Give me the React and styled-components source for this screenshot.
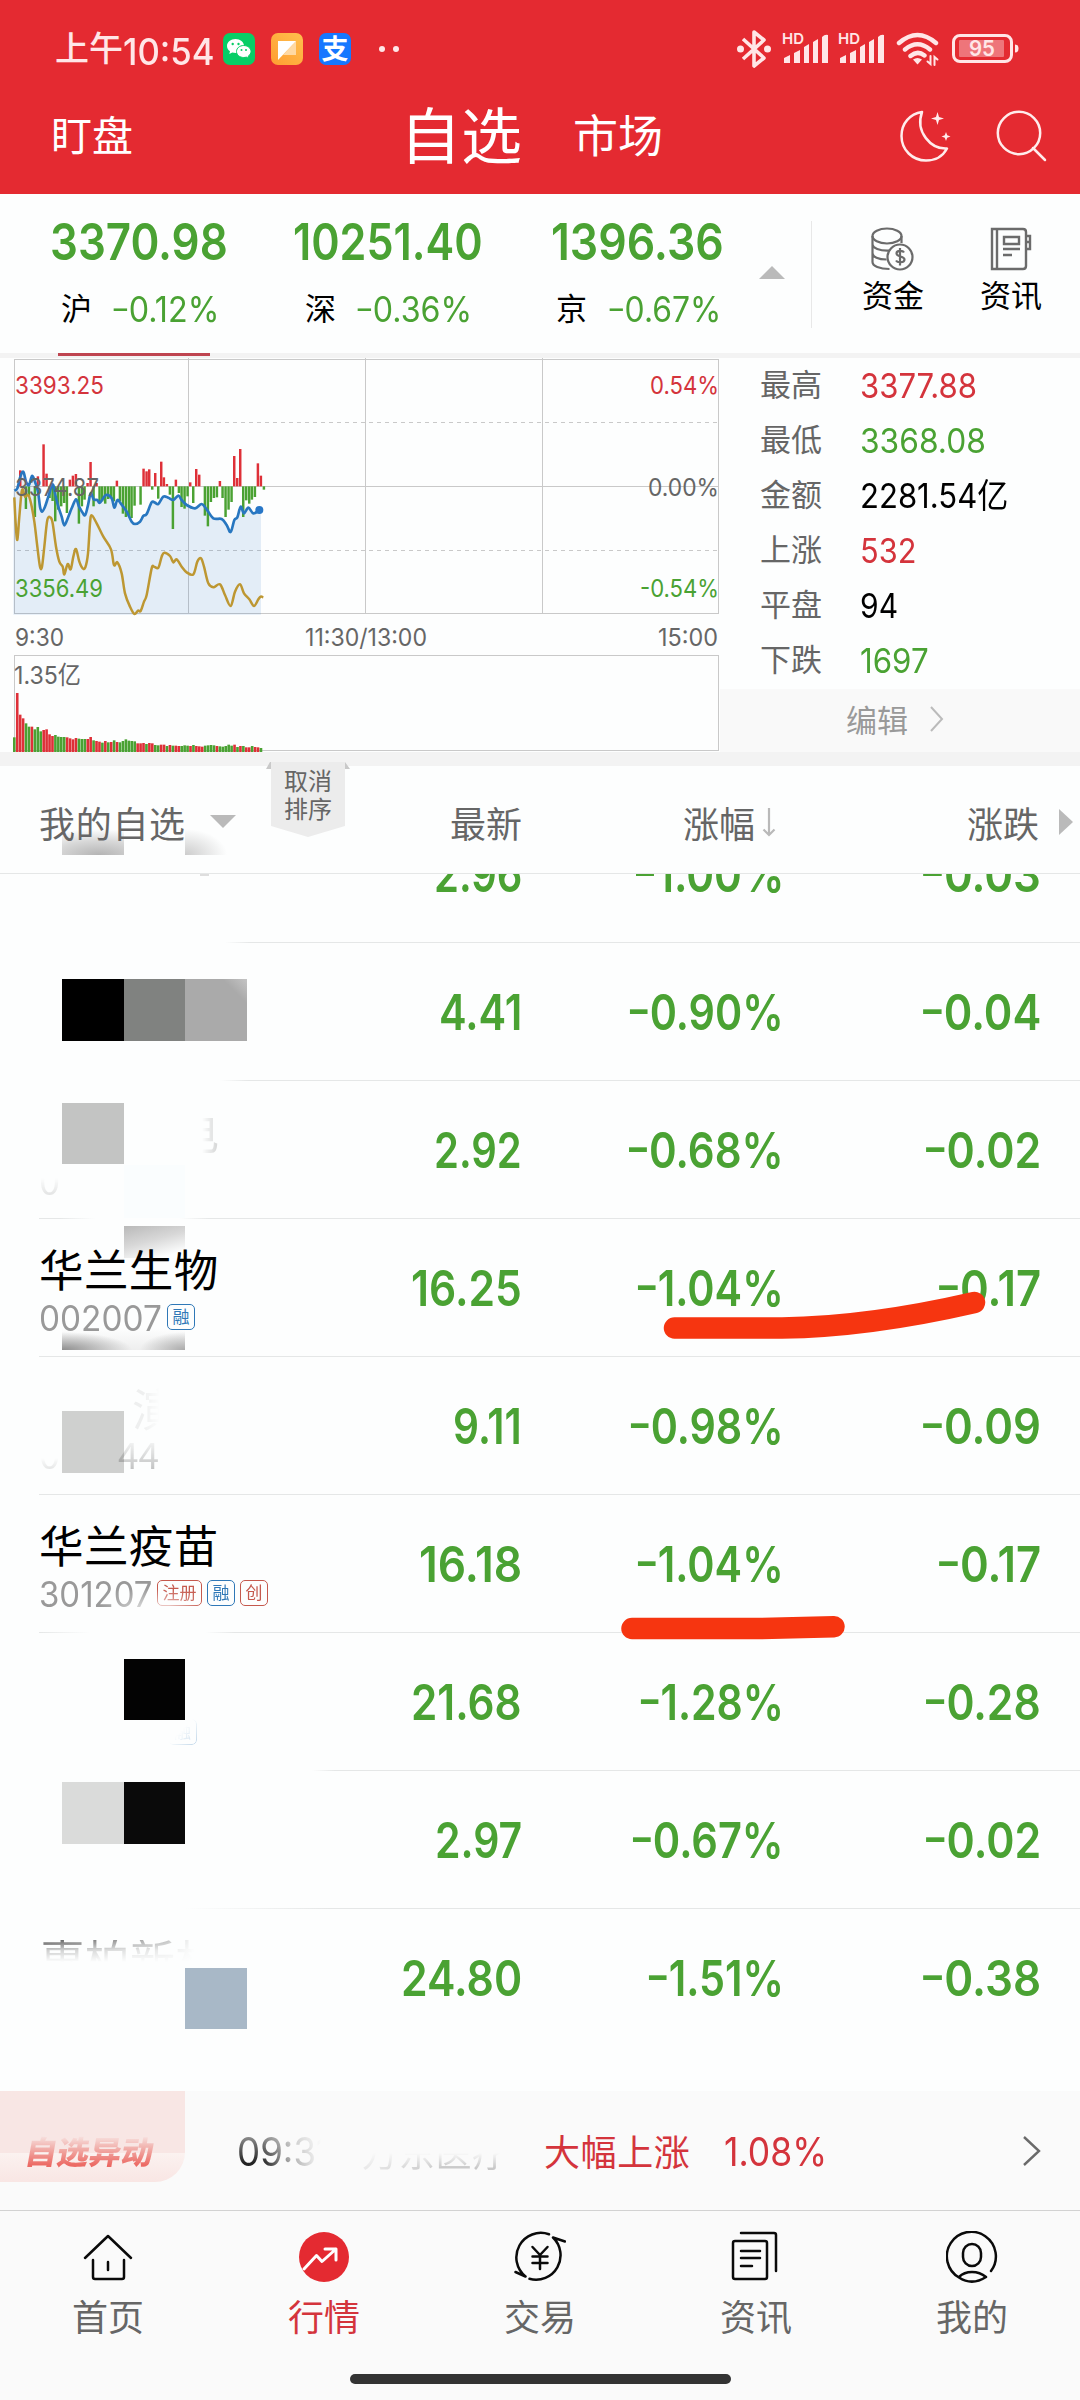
import React, { useLayoutEffect, useRef, useState } from "react";
import styled, { createGlobalStyle } from "styled-components";

const GREEN = "#4aa233";
const RED = "#d4343c";
const LINE = "#e5e7e7";

const indexes = [
  { value: "3370.98", vw: 178, name: "沪", pct: "-0.12%", pw: 107, width: 243, nameLeft: 11, gap: 20, active: true },
  { value: "10251.40", vw: 190, name: "深", pct: "-0.36%", pw: 116, width: 258, nameLeft: 12, gap: 20 },
  { value: "1396.36", vw: 173, name: "京", pct: "-0.67%", pw: 113, width: 208, nameLeft: 5, gap: 21 },
];

const stats = [
  { label: "最高", value: "3377.88", width: 117, color: RED },
  { label: "最低", value: "3368.08", width: 126, color: GREEN },
  { label: "金额", value: "2281.54亿", width: 148, color: "#000" },
  { label: "上涨", value: "532", width: 56, color: RED },
  { label: "平盘", value: "94", width: 38, color: "#000" },
  { label: "下跌", value: "1697", width: 69, color: GREEN },
];

const rows = [
  {
    price: ["2.96", 88],
    pct: ["-1.00%", 150],
    diff: ["-0.03", 120],
    line: "transparent 225px, #e5e7e7 250px",
    blocks: [{ x: 200, y: 69, w: 9, h: 2, bg: "#dedede" }],
  },
  {
    price: ["4.41", 83],
    pct: ["-0.90%", 156],
    diff: ["-0.04", 120],
    line: "transparent 220px, #e5e7e7 248px",
    blocks: [
      { x: 62, y: 36, w: 62, h: 62, bg: "#000" },
      { x: 124, y: 36, w: 61, h: 62, bg: "#808280" },
      { x: 185, y: 36, w: 62, h: 62, bg: "linear-gradient(225deg, #c4c4c4, #aaa 20%)" },
    ],
  },
  {
    price: ["2.92", 88],
    pct: ["-0.68%", 157],
    diff: ["-0.02", 117],
    line: "transparent 39px, #e5e7e7 39px, #e5e7e7 60px, transparent 95px, transparent 180px, #e5e7e7 210px",
    ghosts: [
      { text: "电", x: 174, y: 25, size: 45, mask: "linear-gradient(90deg, transparent 28px, rgba(0,0,0,.14) 42px)" },
      { text: "0", x: 39, y: 73, size: 38, mask: "linear-gradient(transparent 24px, rgba(0,0,0,.11) 42px)" },
    ],
    blocks: [
      { x: 62, y: 22, w: 62, h: 61, bg: "#c3c4c3" },
      { x: 124, y: 84, w: 61, h: 53, bg: "#fafdfe" },
    ],
  },
  {
    name: "华兰生物",
    code: ["002007", 123],
    tags: [["融", "#2f78b7"]],
    price: ["16.25", 111],
    pct: ["-1.04%", 148],
    diff: ["-0.17", 104],
    line: "transparent 39px, #e5e7e7 39px",
    blocks: [
      { x: 124, y: 7, w: 61, h: 32, bg: "linear-gradient(165deg, #b9b9b9, #d8d8d8 45%, #fdfefe 85%)" },
      {
        x: 62,
        y: 109,
        w: 123,
        h: 22,
        bg: "radial-gradient(70px 18px at 0 100%, #8e8e8e, transparent), radial-gradient(45px 18px at 100% 100%, #aaa, transparent), linear-gradient(#fdfefe, #eee)",
      },
    ],
  },
  {
    price: ["9.11", 69],
    pct: ["-0.98%", 155],
    diff: ["-0.09", 120],
    line: "transparent 39px, #e5e7e7 39px",
    ghosts: [
      { text: "演", x: 132, y: 26, size: 45, mask: "linear-gradient(90deg, rgba(0,0,0,.06) 10px, transparent 28px)" },
      { text: "44", x: 118, y: 71, size: 37, over: true, mask: "linear-gradient(transparent 8px, rgba(0,0,0,.25) 44px)" },
      { text: "0", x: 39, y: 71, size: 38, mask: "linear-gradient(transparent 30px, rgba(0,0,0,.1) 42px)" },
    ],
    blocks: [{ x: 62, y: 54, w: 62, h: 62, bg: "#cfd0cf" }],
  },
  {
    name: "华兰疫苗",
    code: ["301207", 113],
    fade: true,
    tags: [
      ["注册", "#c5594d"],
      ["融", "#2f78b7"],
      ["创", "#c5594d"],
    ],
    price: ["16.18", 103],
    pct: ["-1.04%", 148],
    diff: ["-0.17", 104],
    line: "transparent 39px, #e5e7e7 39px, transparent 90px, transparent 205px, #e5e7e7 235px",
    blocks: [],
  },
  {
    price: ["21.68", 111],
    pct: ["-1.28%", 145],
    diff: ["-0.28", 117],
    line: "transparent 312px, #e5e7e7 335px",
    ghostTag: true,
    blocks: [{ x: 124, y: 26, w: 61, h: 61, bg: "#030303" }],
  },
  {
    price: ["2.97", 87],
    pct: ["-0.67%", 153],
    diff: ["-0.02", 117],
    line: "transparent 185px, #e5e7e7 330px",
    blocks: [
      { x: 62, y: 11, w: 62, h: 62, bg: "#dadbda" },
      { x: 124, y: 11, w: 61, h: 62, bg: "#0a0a0a" },
    ],
  },
  {
    price: ["24.80", 121],
    pct: ["-1.51%", 137],
    diff: ["-0.38", 120],
    line: "transparent, transparent",
    ghosts: [
      {
        text: "惠柏新材",
        x: 40,
        y: 25,
        size: 45,
        mask: "linear-gradient(transparent 6px, #000 6px, rgba(0,0,0,.3) 16px, transparent 28px), linear-gradient(90deg, rgba(0,0,0,.65), rgba(0,0,0,.25) 125px, transparent 155px)",
      },
    ],
    blocks: [{ x: 185, y: 59, w: 62, h: 61, bg: "#a8b8c7" }],
  },
];

// Stretches a run of digits to a fixed column width
function Fit({ w, children }) {
  const ref = useRef(null);
  const [scale, setScale] = useState(1);
  const negative = children[0] === "-";

  useLayoutEffect(() => {
    setScale(w / ref.current.offsetWidth);
  }, [w, children]);

  return (
    <FitBox style={{ width: w }}>
      <FitText ref={ref} style={{ transform: `scaleX(${scale})` }}>
        {negative && <Minus>-</Minus>}
        {negative ? children.slice(1) : children}
      </FitText>
    </FitBox>
  );
}

/* ---------- chart data, in thirds of a pixel ---------- */

const bars = [
  [61, 48], [78, -68], [87, -30], [105, -92], [114, 30], [131, 126], [140, 38], [149, -35], [158, -44], [166, -105],
  [175, -70], [184, -60], [193, -50], [201, -80], [210, 20], [219, 32], [228, 37], [237, -112], [246, -60],
  [254, -40], [263, 10], [272, 73], [281, -60], [290, 10], [299, -48], [307, -45], [316, -52], [325, -38],
  [334, -35], [342, -45], [351, 17], [360, -45], [369, -82], [378, -92], [387, -88], [395, -95], [404, -58],
  [422, -55], [431, 53], [440, 45], [448, 51], [457, -10], [466, 40], [475, -37], [484, 74], [492, 27], [501, 7],
  [510, -25], [519, -128], [528, 20], [537, -20], [545, -62], [554, -67], [563, -30], [571, 12], [580, -50],
  [589, 52], [598, 35], [615, -88], [624, -120], [633, -47], [642, -35], [651, -33], [660, 16], [668, -35],
  [677, -92], [686, -70], [695, -47], [703, 91], [712, 25], [721, 112], [730, -92], [739, -42], [748, -52],
  [756, -40], [765, -32], [774, 69], [783, 32], [792, -10],
];

const priceLine =
  "43,452 52,445 61,410 70,395 78,425 87,435 96,408 105,425 114,455 120,500 126,515 135,500 145,470 158,433 166,465 175,500 185,530 193,556 205,530 215,505 228,478 237,500 246,515 255,526 263,500 272,460 281,478 292,480 300,488 318,465 335,475 343,503 352,480 362,490 380,515 395,545 405,552 420,545 430,528 440,522 455,487 465,488 475,492 490,470 505,473 520,480 535,467 545,480 560,495 585,505 605,492 620,508 640,535 665,537 680,555 692,576 703,540 712,532 722,500 732,520 745,503 760,520 778,510";

const averageLine =
  "43,472 47,550 52,600 58,530 66,450 75,470 85,465 93,490 103,545 112,620 120,680 126,680 133,620 142,540 152,533 158,550 168,620 178,665 188,680 193,703 203,672 212,688 220,650 228,627 238,665 248,685 256,682 264,640 270,550 275,526 290,550 310,590 333,628 342,675 352,667 365,700 375,760 390,800 403,822 414,812 422,813 432,785 440,765 455,685 462,680 475,683 485,650 493,638 510,648 520,667 530,658 545,680 560,697 580,703 592,665 603,655 612,680 625,730 640,742 660,733 675,765 692,798 705,755 720,733 732,760 748,778 762,798 775,778 782,770 790,772";

const volumes = [
  44, 177, 112, 101, 86, 76, 76, 68, 75, 62, 66, 68, 53, 48, 51, 46, 45, 45, 44, 41, 38, 42, 40, 39, 39, 39, 45, 35,
  33, 31, 28, 33, 29, 30, 35, 30, 29, 33, 38, 34, 33, 32, 26, 26, 27, 24, 27, 26, 21, 20, 22, 22, 18, 21, 19, 19, 18,
  18, 20, 19, 18, 21, 18, 17, 16, 19, 20, 21, 20, 18, 17, 16, 18, 22, 19, 22, 15, 18, 18, 14, 14, 18, 15, 14, 12,
];
const volumeColors =
  "grrrggrgggrrrrggggrrrrgggrrgrrgrgrgrggggggrrrgrrggrrgrgrrgggrgrrrggggrggggg" + "rgrgrrgrrg";

function smooth(str) {
  const p = str.split(" ").map((s) => s.split(",").map(Number));
  let d = `M${p[0]}`;
  for (let i = 0; i < p.length - 1; i++) {
    const a = p[i - 1] || p[i];
    const b = p[i];
    const c = p[i + 1];
    const e = p[i + 2] || c;
    d += `C${b[0] + (c[0] - a[0]) / 6},${b[1] + (c[1] - a[1]) / 6} ${c[0] - (e[0] - b[0]) / 6},${c[1] - (e[1] - b[1]) / 6} ${c}`;
  }
  return d;
}

function Chart() {
  return (
    <ChartSvg width="720" height="394" viewBox="0 0 720 394">
      <g stroke="#c9c9c9" fill="none">
        <rect x="14.5" y="1.5" width="704" height="254" />
        <path d="M14 128.5H719M188.5 0V256M365.5 0V256M542.5 0V256" />
        <path d="M17 64.5H718M17 192.5H718" strokeDasharray="4 4" />
        <rect x="14.5" y="297.5" width="704" height="95" />
      </g>
      <g transform="scale(.33333) translate(0 -54)">
        <path d={`${smooth(priceLine)}L783,512V824H40V452Z`} fill="#2877c7" opacity=".12" />
        {bars.map(([x, h]) => (
          <rect key={x} x={x - 4} y={h > 0 ? 439 - h : 439} width="7.4" height={Math.abs(h)} fill={h > 0 ? "#de3038" : GREEN} />
        ))}
        <path d={smooth(averageLine)} fill="none" stroke="#bd9732" strokeWidth="7.5" />
        <path d={smooth(priceLine)} fill="none" stroke="#2877c0" strokeWidth="8" />
        <circle cx="778" cy="510" r="12" fill="#2877c7" />
        {volumes.map((h, i) => (
          <rect key={i} x={39 + i * 8.81} y={1236 - h} width="7.8" height={h} fill={volumeColors[i] === "r" ? "#de3038" : GREEN} />
        ))}
      </g>
      <text x="15" y="137.500" textLength="84" lengthAdjust="spacingAndGlyphs" fill="#666">3374.87</text>
      <text x="15" y="36" textLength="89" lengthAdjust="spacingAndGlyphs" fill={RED}>3393.25</text>
      <text x="15" y="239" textLength="88" lengthAdjust="spacingAndGlyphs" fill={GREEN}>3356.49</text>
      <text x="650" y="36" textLength="69" lengthAdjust="spacingAndGlyphs" fill={RED}>0.54%</text>
      <text x="648" y="137.500" textLength="71" lengthAdjust="spacingAndGlyphs" fill="#666">0.00%</text>
      <text x="640" y="239" textLength="79" lengthAdjust="spacingAndGlyphs" fill={GREEN}>-0.54%</text>
      <text x="15" y="287.500" textLength="49" lengthAdjust="spacingAndGlyphs" fill="#666">9:30</text>
      <text x="305" y="287.500" textLength="122" lengthAdjust="spacingAndGlyphs" fill="#666">11:30/13:00</text>
      <text x="658" y="287.500" textLength="60" lengthAdjust="spacingAndGlyphs" fill="#666">15:00</text>
      <text x="14" y="326" textLength="67" lengthAdjust="spacingAndGlyphs" fill="#666">1.35亿</text>
    </ChartSvg>
  );
}

/* ---------- icons ---------- */

const Signal = () => (
  <svg width="48" height="36" viewBox="0 0 48 36" fill="#ffe6e7" overflow="visible">
    <text x="0" y="12.500" fontSize="15" fontWeight="600" textLength="22" lengthAdjust="spacingAndGlyphs" fontFamily="Inter, sans-serif">HD</text>
    <path d="M2 27l6-3v8H2zM12 22l6-3v13h-6zM22 16l5-3v19h-5zM31 11l5-3v24h-5zM40 6q3-3 6-2v28h-6z" />
  </svg>
);

const StatusIcons = () => (
  <StatusRight>
    <svg width="34" height="38" viewBox="0 0 34 38" fill="none" stroke="#ffe6e7" strokeWidth="3.6" strokeLinejoin="round">
      <path d="M6 9L27 28L17 36V2L27 10L6 29" />
      <circle cx="3.500" cy="19" r="3.500" fill="#ffe6e7" stroke="none" />
      <circle cx="30.500" cy="19" r="3.500" fill="#ffe6e7" stroke="none" />
    </svg>
    <SignalGap $w={11} />
    <Signal />
    <SignalGap $w={8} />
    <Signal />
    <SignalGap $w={10} />
    <svg width="44" height="36" viewBox="0 0 44 36" fill="none" stroke="#ffe6e7" strokeWidth="4.400" strokeLinecap="round">
      <path d="M3 12Q21.500-4 40 12M9 18.500Q21.500 8 34 18.500M14.500 25Q21.500 19 28.500 24.500" />
      <path d="M17 28.500q4.500-3 9 0l-4.500 5z" fill="#ffe6e7" stroke="none" />
      <path d="M34.500 25v8l-3-2.500M38.500 34v-8l3 2.500" strokeWidth="2" />
    </svg>
    <SignalGap $w={12} />
    <svg width="68" height="30" viewBox="0 0 68 30">
      <rect x="1.500" y="1.500" width="58" height="26" rx="6.500" fill="none" stroke="#ffe6e7" strokeWidth="3" />
      <rect x="7" y="6" width="45" height="17" rx="1" fill="#ee757a" />
      <path d="M63 10.500q3.500 0 3.500 4t-3.500 4z" fill="#ffe6e7" />
      <text x="17" y="22" fontSize="22" fontWeight="600" fill="#ffe6e7" textLength="26" lengthAdjust="spacingAndGlyphs" fontFamily="Inter, sans-serif">95</text>
    </svg>
  </StatusRight>
);

const AppIcons = () => (
  <AppIconRow>
    <svg width="32" height="32" viewBox="0 0 32 32">
      <rect width="32" height="32" rx="7" fill="#07ce66" />
      <path d="M12.500 6C7.800 6 4 9 4 13c0 2.200 1.100 4 3 5.300L6.300 21l3-1.500c1 .3 2.200.5 3.400.5C17.200 20 21 17 21 13s-3.800-7-8.500-7z" fill="#fff" />
      <path d="M20.700 12.500c-4 0-7.200 2.600-7.200 6s3.200 6 7.200 6c.9 0 1.800-.1 2.600-.4l2.600 1.400-.7-2.300c1.700-1.200 2.800-2.900 2.800-4.700 0-3.400-3.300-6-7.300-6z" fill="#fff" stroke="#07ce66" />
      <g fill="#07ce66">
        <circle cx="9.700" cy="11" r="1.200" />
        <circle cx="15.500" cy="11" r="1.200" />
        <circle cx="18.500" cy="17" r="1" />
        <circle cx="23" cy="17" r="1" />
      </g>
    </svg>
    <svg width="32" height="32" viewBox="0 0 32 32">
      <defs>
        <linearGradient id="note" x1="0" y1="1" x2="1" y2="0">
          <stop stopColor="#ff9d32" />
          <stop offset="1" stopColor="#ffc04d" />
        </linearGradient>
      </defs>
      <rect width="32" height="32" rx="7" fill="url(#note)" />
      <path d="M25 8v14H12z" fill="#ffd9a3" />
      <path d="M7 8h18L7 27z" fill="#fff" />
    </svg>
    <PayIcon>支</PayIcon>
    <Dots>
      <i />
      <i />
    </Dots>
  </AppIconRow>
);

const MoonIcon = () => (
  <svg width="52" height="52" viewBox="0 0 52 52" fill="none" stroke="#ffecec" strokeWidth="2.500" strokeLinejoin="round">
    <path d="M22 2C10 4 1.500 13 1.500 26c0 14 11 24.500 24.500 24.500 9.500 0 17-4.500 21-12C31 39.500 15 22 22 2z" />
    <path d="M37.500 2l1.500 5 5 1.500-5 1.500-1.500 5-1.500-5-5-1.500 5-1.500zM46 22l1.200 3.300L50.500 26.500l-3.300 1.200L46 31l-1.200-3.300-3.300-1.200 3.300-1.200z" fill="#ffecec" stroke="none" />
  </svg>
);

const SearchIcon = () => (
  <svg width="52" height="52" viewBox="0 0 52 52" fill="none" stroke="#ffecec" strokeWidth="2.500">
    <circle cx="23" cy="23" r="21.200" />
    <path d="M37 38l12 12" strokeLinecap="round" />
  </svg>
);

const FundIcon = () => (
  <svg width="44" height="44" viewBox="0 0 44 44" fill="none" stroke="#6b6b6b" strokeWidth="2.200">
    <ellipse cx="16" cy="9" rx="14.500" ry="7.500" />
    <path d="M1.500 9v26c0 4 7 7 17 7M30.500 9v7M1.500 17c0 4 7 7 17 6.500M1.500 26c0 4 6 6.500 14 6.500" />
    <circle cx="29" cy="30" r="12.500" fill="#fdfefe" />
    <path d="M33 25.500c-1-2-7.500-2.500-7.500 1s8 2.500 8 6-7 3.500-8.500 1M29 21v17.500" />
  </svg>
);

const BookIcon = () => (
  <svg width="42" height="44" viewBox="0 0 42 44" fill="none" stroke="#6b6b6b" strokeWidth="2.400">
    <path d="M2 2h31q3 0 3 3v34q0 3-3 3H2zM7 2v40" />
    <path d="M14 10h15v7H14zM13 22h17M13 28h9" />
    <path d="M36 9h4v6h-4M36 15h4v7h-4" />
  </svg>
);

const tabs = [
  {
    label: "首页",
    icon: <path d="M3 27L26 5l23 22M11 29v17q0 2 2 2h27q2 0 2-2V29M26 31v8" />,
  },
  {
    label: "行情",
    active: true,
    icon: (
      <>
        <circle cx="26" cy="26" r="25" fill="#e42a31" stroke="none" />
        <path d="M6 38L18.500 24.500l5.500 6L38 18M27 18h11v11" stroke="#fff" strokeWidth="3" />
      </>
    ),
  },
  {
    label: "交易",
    icon: (
      <>
        <path d="M11.500 45.500A24.500 24.500 0 0 1 35 3.300M39 6.500A24.500 24.500 0 0 1 15.500 47.800M1.500 41l10 4.500M51 10.500L39 6.500" />
        <path d="M18.500 16l7.500 8 7.500-8M26 24v14M18.500 25.500h15M18.500 32h15" />
      </>
    ),
  },
  {
    label: "资讯",
    icon: <path d="M11 2h33q2 0 2 2v36M5 10h30q2 0 2 2v34q0 2-2 2H5q-2 0-2-2V12q0-2 2-2zM11 20h19M11 27h19M11 35h11" />,
  },
  {
    label: "我的",
    icon: (
      <>
        <path d="M45 40A24.500 24.500 0 1 0 13 46.500M13 46Q18 41 26 41t14 5Q26 55 13 46.500" />
        <rect x="17" y="13" width="18" height="22" rx="9" />
      </>
    ),
  },
];

function StockRow({ item }) {
  const ghosts = item.ghosts || [];

  return (
    <Row $line={item.line}>
      {ghosts.filter((g) => !g.over).map((g) => (
        <Ghost key={g.text} $x={g.x} $y={g.y} $size={g.size} $mask={g.mask}>{g.text}</Ghost>
      ))}
      {item.blocks.map((b) => (
        <Mosaic key={`${b.x}-${b.y}`} $x={b.x} $y={b.y} $w={b.w} $h={b.h} $bg={b.bg} />
      ))}
      {ghosts.filter((g) => g.over).map((g) => (
        <Ghost key={g.text} $x={g.x} $y={g.y} $size={g.size} $mask={g.mask}>{g.text}</Ghost>
      ))}
      {item.ghostTag && <GhostTag>融</GhostTag>}
      <NameCell>
        {item.name && (
          <>
            <StockName>{item.name}</StockName>
            <CodeLine $fade={item.fade}>
              <Code><Fit w={item.code[1]}>{item.code[0]}</Fit></Code>
              {item.tags.map(([text, color]) => (
                <Tag key={text} $color={color}>{text}</Tag>
              ))}
            </CodeLine>
          </>
        )}
      </NameCell>
      <Cell><Fit w={item.price[1]}>{item.price[0]}</Fit></Cell>
      <Cell><Fit w={item.pct[1]}>{item.pct[0]}</Fit></Cell>
      <Cell><Fit w={item.diff[1]}>{item.diff[0]}</Fit></Cell>
    </Row>
  );
}

function App() {
  return (
    <Screen>
      <GlobalStyle />
      <Header>
        <StatusBar>
          <Clock>上午</Clock>
          <ClockDigits><Fit w={92}>10:54</Fit></ClockDigits>
          <AppIcons />
          <StatusIcons />
        </StatusBar>
        <NavBar>
          <NavSide>盯盘</NavSide>
          <NavMain>自选</NavMain>
          <NavOther>市场</NavOther>
          <NavIcons>
            <MoonIcon />
            <SearchIcon />
          </NavIcons>
        </NavBar>
      </Header>

      <IndexBar>
        {indexes.map((it) => (
          <IndexItem key={it.name} $w={it.width} $active={it.active}>
            <IndexValue><Fit w={it.vw}>{it.value}</Fit></IndexValue>
            <IndexSub $left={it.nameLeft} $gap={it.gap}>
              <span>{it.name}</span>
              <IndexPct><Fit w={it.pw}>{it.pct}</Fit></IndexPct>
            </IndexSub>
          </IndexItem>
        ))}
        <UpTriangle />
        <Shortcuts>
          <Shortcut>
            <FundIcon />
            资金
          </Shortcut>
          <Shortcut>
            <BookIcon />
            资讯
          </Shortcut>
        </Shortcuts>
      </IndexBar>

      <Market>
        <Chart />
        <StatPanel>
          <StatList>
            {stats.map((s) => (
              <Stat key={s.label}>
                <StatLabel>{s.label}</StatLabel>
                <StatValue $color={s.color}><Fit w={s.width}>{s.value}</Fit></StatValue>
              </Stat>
            ))}
          </StatList>
          <EditBar>
            编辑
            <svg width="14" height="26" viewBox="0 0 14 26" fill="none" stroke="#bbb" strokeWidth="2">
              <path d="M1 1l11 12L1 25" />
            </svg>
          </EditBar>
        </StatPanel>
      </Market>

      <TableHead>
        <HeadBlocks>
          <Mosaic $x={62} $y={61} $w={62} $h={28} $bg="radial-gradient(80px 26px at 60% 100%, #b4b4b4, rgba(200,200,200,.7) 55%, transparent)" />
          <Mosaic $x={185} $y={61} $w={45} $h={28} $bg="radial-gradient(42px 26px at 0 100%, #ccc, transparent)" />
        </HeadBlocks>
        <HeadName>
          我的自选
          <DownTriangle />
        </HeadName>
        <SortBadge>
          <svg width="84" height="76" viewBox="0 0 84 76">
            <path d="M4 0L0 7h5V0zM79 0l5 7h-5V0z" fill="#c9c9c9" />
            <path d="M5 0h74v64L42 75 5 64z" fill="#ececec" />
          </svg>
          <BadgeText>
            <span>取消</span>
            <span>排序</span>
          </BadgeText>
        </SortBadge>
        <HeadCell $w={172}>最新</HeadCell>
        <HeadCell $w={233}>涨幅</HeadCell>
        <SortArrow width="14" height="30" viewBox="0 0 14 30" fill="none" stroke="#b9b9b9" strokeWidth="2.200">
          <path d="M7 1v27M1.500 22.500L7 28l5.500-5.500" />
        </SortArrow>
        <HeadCell $w={263}>涨跌</HeadCell>
        <RightTriangle />
      </TableHead>

      <List>
        {rows.map((item, i) => (
          <StockRow key={i} item={item} />
        ))}
        <Marks width="1080" height="1217" viewBox="0 874 1080 1217" fill="none" stroke="#f63510" strokeWidth="21.500" strokeLinecap="round">
          <path d="M674.500 1328H782Q868 1327 974.500 1302.500" />
          <path d="M632 1628.500H760L834 1626.700" />
        </Marks>
      </List>

      <Ticker>
        <TickerBadge>
          <TickerLogo>自选异动</TickerLogo>
        </TickerBadge>
        <TickerTime><Fit w={94}>09:31</Fit></TickerTime>
        <TickerStock>万东医疗</TickerStock>
        <TickerEvent>大幅上涨</TickerEvent>
        <TickerPct><Fit w={103}>1.08%</Fit></TickerPct>
        <TickerArrow width="20" height="32" viewBox="0 0 20 32" fill="none" stroke="#6a6a6a" strokeWidth="2.400">
          <path d="M2 2l15 14L2 30" />
        </TickerArrow>
      </Ticker>

      <TabBar>
        {tabs.map((t) => (
          <Tab key={t.label} $active={t.active}>
            <svg width="52" height="52" viewBox="0 0 52 52" fill="none" stroke="#0a0a0a" strokeWidth="2.500" strokeLinecap="round" strokeLinejoin="round">
              {t.icon}
            </svg>
            {t.label}
          </Tab>
        ))}
      </TabBar>
      <HomeBar>
        <HomePill />
      </HomeBar>
    </Screen>
  );
}

const GlobalStyle = createGlobalStyle`
  body {
    margin: 0;
    background: #fdfefe;
  }

  * {
    box-sizing: border-box;
  }

  svg {
    display: block;
    flex-shrink: 0;
  }
`;

const Screen = styled.div`
  width: 1080px;
  height: 2400px;
  overflow: hidden;
  display: flex;
  flex-direction: column;
  background: #fdfefe;
  font-family: "Noto Sans CJK SC", sans-serif;
  color: #000;
`;

const FitBox = styled.span`
  display: inline-block;
  white-space: nowrap;
  font-family: Inter, "Noto Sans CJK SC", sans-serif;
  font-feature-settings: "case";
  text-align: left;
  flex-shrink: 0;
`;

const FitText = styled.span`
  display: inline-block;
  transform-origin: 0 50%;
`;

const Minus = styled.span`
  display: inline-block;
  padding: 0 0.03em;
  transform: scale(1.3, 0.9);
`;

const Header = styled.header`
  height: 194px;
  background: #e42a31;
  color: #fff;
`;

const StatusBar = styled.div`
  height: 98px;
  padding-left: 55px;
  display: flex;
  align-items: center;
  color: #ffe6e7;
`;

const Clock = styled.span`
  font-size: 34px;
  font-weight: 500;
  line-height: 40px;
  padding-bottom: 5px;
`;

const ClockDigits = styled.span`
  font-size: 37px;
  font-weight: 500;
  line-height: 40px;
  padding-top: 2px;
`;

const AppIconRow = styled.div`
  margin-left: 8px;
  display: flex;
  align-items: center;
  gap: 16px;
`;

const PayIcon = styled.span`
  width: 32px;
  height: 32px;
  border-radius: 7px;
  background: #1677ff;
  color: #fff;
  font-size: 27px;
  font-weight: 700;
  line-height: 29px;
  text-align: center;
`;

const Dots = styled.span`
  margin-left: 12px;
  display: flex;
  gap: 8px;

  i {
    width: 6px;
    height: 6px;
    border-radius: 50%;
    background: #ffe6e7;
  }
`;

const StatusRight = styled.div`
  margin-left: auto;
  padding-right: 60px;
  display: flex;
  align-items: center;
`;

const SignalGap = styled.i`
  width: ${(p) => p.$w}px;
`;

const NavBar = styled.nav`
  height: 76px;
  padding-left: 51px;
  display: flex;
  align-items: center;
`;

const NavSide = styled.span`
  width: 349px;
  font-size: 41px;
  line-height: 70px;
  padding-bottom: 6px;
`;

const NavMain = styled.span`
  width: 173px;
  font-size: 61px;
  line-height: 70px;
  padding-bottom: 6px;
`;

const NavOther = styled.span`
  font-size: 45px;
  line-height: 70px;
  padding-bottom: 5px;
`;

const NavIcons = styled.div`
  margin-left: auto;
  padding-right: 32px;
  display: flex;
  gap: 44px;
`;

const IndexBar = styled.section`
  height: 164px;
  padding-left: 50px;
  display: flex;
  border-bottom: 5px solid #f3f3f3;
`;

const IndexItem = styled.div`
  position: relative;
  width: ${(p) => p.$w}px;
  flex-shrink: 0;
  padding-top: 14px;

  &::after {
    content: "";
    display: ${(p) => (p.$active ? "block" : "none")};
    position: absolute;
    left: 8px;
    bottom: -3px;
    width: 152px;
    height: 3px;
    background: #bf4550;
  }
`;

const IndexValue = styled.div`
  height: 60px;
  font-size: 51px;
  font-weight: 600;
  line-height: 60px;
  color: ${GREEN};
`;

const IndexSub = styled.div`
  height: 60px;
  margin-top: 10px;
  padding-left: ${(p) => p.$left}px;
  display: flex;
  align-items: center;
  gap: ${(p) => p.$gap}px;
  font-size: 31px;
  line-height: 60px;

  > span:first-child {
    padding-bottom: 3px;
  }
`;

const IndexPct = styled.span`
  font-size: 35px;
  color: ${GREEN};
`;

const UpTriangle = styled.i`
  margin-top: 72px;
  width: 0;
  height: 13px;
  border: 13px solid transparent;
  border-top: 0;
  border-bottom-color: #bababa;
`;

const Shortcuts = styled.div`
  margin: 27px 0 25px 26px;
  padding-left: 34px;
  border-left: 1px solid #e8e8e8;
  display: flex;
  gap: 24px;
`;

const Shortcut = styled.div`
  width: 94px;
  padding-top: 6px;
  display: flex;
  flex-direction: column;
  align-items: center;
  gap: 5px;
  font-size: 31px;
  line-height: 36px;
`;

const Market = styled.section`
  height: 408px;
  display: flex;
  border-bottom: 14px solid #f3f3f3;
`;

const ChartSvg = styled.svg`
  overflow: visible;
  font-family: Inter, "Noto Sans CJK SC", sans-serif;
  font-size: 24.5px;
  font-feature-settings: "case";
`;

const StatPanel = styled.div`
  flex: 1;
`;

const StatList = styled.div`
  height: 331px;
`;

const Stat = styled.div`
  height: 55px;
  padding-left: 40px;
  display: flex;
  align-items: center;
`;

const StatLabel = styled.span`
  width: 100px;
  font-size: 31px;
  line-height: 50px;
  padding-bottom: 5px;
  color: #666;
`;

const StatValue = styled.span`
  font-size: 34px;
  line-height: 54px;
  padding-bottom: 1px;
  color: ${(p) => p.$color};
`;

const EditBar = styled.div`
  height: 63px;
  padding: 0 0 4px 126px;
  display: flex;
  align-items: center;
  gap: 22px;
  background: #f9f9f9;
  color: #999;
  font-size: 31px;
`;

const TableHead = styled.section`
  position: relative;
  height: 108px;
  padding: 4px 0 0 39px;
  display: flex;
  align-items: center;
  border-bottom: 1px solid ${LINE};
  color: #666;
  font-size: 36px;
  line-height: 100px;
`;

const HeadBlocks = styled.div`
  position: absolute;
  inset: 0;
`;

const HeadName = styled.div`
  position: relative;
  width: 227px;
  display: flex;
  align-items: center;
  gap: 24px;
  letter-spacing: 0.7px;
`;

const DownTriangle = styled.i`
  border: 13px solid transparent;
  border-bottom: 0;
  border-top-color: #bababa;
`;

const SortBadge = styled.div`
  position: relative;
  align-self: flex-start;
  width: 84px;
  margin-top: -8px;
`;

const BadgeText = styled.div`
  position: absolute;
  left: 0;
  top: 4px;
  width: 84px;
  display: flex;
  flex-direction: column;
  align-items: center;
  font-size: 24px;
  line-height: 28px;
`;

const HeadCell = styled.span`
  width: ${(p) => p.$w}px;
  text-align: right;
`;

const SortArrow = styled.svg`
  margin-left: 7px;
`;

const RightTriangle = styled.i`
  margin-left: 20px;
  border: 13px solid transparent;
  border-right: 0;
  border-left: 14px solid #bababa;
`;

const List = styled.section`
  position: relative;
  height: 1217px;
  overflow: hidden;
  display: flex;
  flex-direction: column;

  > :first-child {
    margin-top: -69px;
  }
`;

const Row = styled.div`
  position: relative;
  height: 138px;
  flex-shrink: 0;
  display: grid;
  grid-template-columns: 322px 200px 262px 257px;
  background: linear-gradient(90deg, ${(p) => p.$line}) 0 100% / 100% 1px no-repeat;
`;

const Mosaic = styled.i`
  position: absolute;
  left: ${(p) => p.$x}px;
  top: ${(p) => p.$y}px;
  width: ${(p) => p.$w}px;
  height: ${(p) => p.$h}px;
  background: ${(p) => p.$bg};
`;

const Ghost = styled.span`
  position: absolute;
  left: ${(p) => p.$x}px;
  top: ${(p) => p.$y}px;
  font-size: ${(p) => p.$size}px;
  line-height: 50px;
  height: 50px;
  white-space: nowrap;
  mask-image: ${(p) => p.$mask};
  mask-composite: intersect;
`;

const GhostTag = styled.span`
  position: absolute;
  left: 168px;
  top: 86px;
  width: 29px;
  height: 26px;
  border: 1px solid #2f78b7;
  border-radius: 5px;
  font-size: 17px;
  line-height: 22px;
  text-align: center;
  color: #2f78b7;
  mask-image: linear-gradient(135deg, transparent 45%, rgba(0, 0, 0, 0.3));
`;

const NameCell = styled.div`
  position: relative;
  padding: 25px 0 0 39px;
`;

const StockName = styled.div`
  font-size: 44.5px;
  line-height: 48px;
  height: 49px;
  letter-spacing: 0.4px;
`;

const CodeLine = styled.div`
  height: 48px;
  display: flex;
  align-items: center;
  gap: 5px;
  mask-image: ${(p) =>
    p.$fade
      ? "linear-gradient(90deg, #000 60px, transparent 110px, transparent 130px, #000 165px), linear-gradient(#000 20px, rgba(0,0,0,.3) 38px)"
      : "none"};
`;

const Code = styled.span`
  font-size: 35px;
  color: #999;
  line-height: 48px;
`;

const Tag = styled.span`
  height: 26px;
  padding: 0 4.5px;
  border: 1.5px solid ${(p) => p.$color};
  border-radius: 5px;
  font-size: 17px;
  line-height: 21px;
  color: ${(p) => p.$color};
`;

const Cell = styled.div`
  display: flex;
  justify-content: flex-end;
  align-items: center;
  font-size: 49.5px;
  font-weight: 600;
  line-height: 60px;
  color: ${GREEN};
`;

const Marks = styled.svg`
  position: absolute;
  left: 0;
  top: 0;
`;

const Ticker = styled.section`
  height: 120px;
  display: flex;
  align-items: center;
  background: #fafafa;
  border-bottom: 1px solid #d2d2d2;
  font-size: 36px;
  line-height: 54px;
`;

const TickerBadge = styled.div`
  align-self: flex-start;
  width: 185px;
  height: 91px;
  padding: 36px 0 0 26px;
  border-bottom-right-radius: 30px;
  background: linear-gradient(#f8e6e4 62px, #fbf2f0 62px, #f9e6e4 90px);
`;

const TickerLogo = styled.span`
  display: block;
  width: 140px;
  font-size: 32px;
  font-weight: 900;
  line-height: 46px;
  transform: skewX(-10deg);
  color: transparent;
  background: linear-gradient(#f8e6e4 8px, #f0a49f 24px, #ec6a64 38px);
  background-clip: text;
`;

const TickerTime = styled.span`
  margin-left: 52px;
  width: 100px;
  font-size: 39px;
  line-height: 60px;
  color: #222;
  mask-image: linear-gradient(90deg, #000 25px, rgba(0, 0, 0, 0.35) 55px, transparent 84px),
    linear-gradient(rgba(0, 0, 0, 0.4) 12px, #000 44px);
  mask-composite: intersect;
`;

const TickerStock = styled.span`
  margin-left: 25px;
  width: 182px;
  letter-spacing: 0.7px;
  mask-image: linear-gradient(transparent 29px, rgba(0, 0, 0, 0.2) 44px),
    linear-gradient(90deg, rgba(0, 0, 0, 0.3), #000 80px);
  mask-composite: intersect;
`;

const TickerEvent = styled.span`
  width: 180px;
  letter-spacing: 0.6px;
  padding-bottom: 2px;
  color: ${RED};
`;

const TickerPct = styled.span`
  font-size: 39px;
  line-height: 60px;
  color: ${RED};
`;

const TickerArrow = styled.svg`
  margin-left: auto;
  margin-right: 38px;
`;

const TabBar = styled.nav`
  height: 163px;
  padding-top: 20px;
  display: grid;
  grid-template-columns: repeat(5, 1fr);
  background: #fafafa;
`;

const Tab = styled.div`
  display: flex;
  flex-direction: column;
  align-items: center;
  gap: 7px;
  font-size: 36px;
  line-height: 50px;
  color: ${(p) => (p.$active ? RED : "#666")};
`;

const HomeBar = styled.div`
  flex: 1;
  display: flex;
  justify-content: center;
  background: #fafafa;
`;

const HomePill = styled.i`
  width: 381px;
  height: 10px;
  border-radius: 5px;
  background: #333;
`;

export default App;
